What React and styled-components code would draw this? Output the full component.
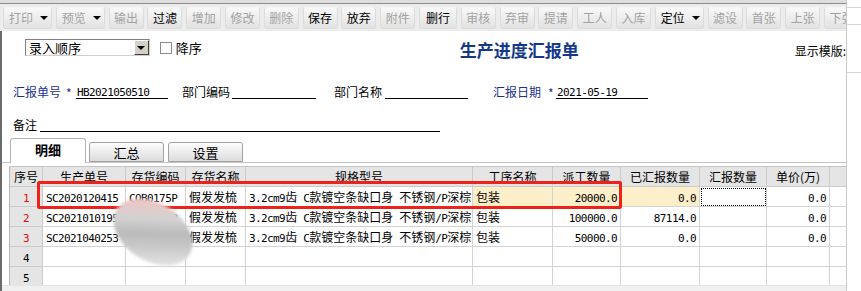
import React from 'react';
import styled, { createGlobalStyle } from 'styled-components';

const GlobalStyle = createGlobalStyle`
  html, body {
    margin: 0;
    padding: 0;
    background: #fff;
  }
  body {
    font-family: "Noto Sans CJK SC", "Noto Sans", sans-serif;
    font-size: 12px;
    color: #000;
  }
`;

const Screen = styled.div`
  width: 861px;
  height: 291px;
  display: flex;
  overflow: hidden;
  background: #fff;
`;

const Main = styled.div`
  width: 846px;
  flex: none;
  display: flex;
  flex-direction: column;
  overflow: hidden;
`;

const Side = styled.div`
  flex: 1;
  border-left: 1px solid #c9c9c9;
  display: flex;
  flex-direction: column;
`;

const SideSlot = styled.div`
  height: ${p => p.$h}px;
  flex: none;
  border-bottom: 1px solid #d6d6d6;
`;

const TopEdge = styled.div`
  height: 3px;
  flex: none;
  background: #dedede;
  border-bottom: 1px solid #8c8c8c;
`;

const Toolbar = styled.div`
  height: 27px;
  flex: none;
  background: #ececec;
  display: flex;
  align-items: center;
  padding-left: 3px;
  gap: 3.8px;
  overflow: hidden;
`;

const ToolButton = styled.div`
  flex: none;
  width: ${p => p.$w}px;
  height: 22px;
  box-sizing: border-box;
  border-radius: 3px;
  background: linear-gradient(#f8f8f8, #e2e2e2);
  border: 1px solid #dcdcdc;
  border-top-color: #f6f6f6;
  display: flex;
  align-items: center;
  justify-content: ${p => (p.$arrow ? 'space-between' : 'center')};
  padding: ${p => (p.$arrow ? '0 3px 0 5px' : '0')};
  font-size: 12px;
  color: ${p => (p.$on ? '#000' : '#a2a2a2')};
  white-space: nowrap;
`;

const DownArrow = styled.span`
  width: 0;
  height: 0;
  border-left: 4px solid transparent;
  border-right: 4px solid transparent;
  border-top: 4px solid #000;
`;

const Body = styled.div`
  flex: 1;
  min-height: 0;
  border-left: 2px solid #6b6b6b;
  display: flex;
  flex-direction: column;
`;

const FormRow = styled.div`
  flex: none;
  display: flex;
  align-items: ${p => p.$align || 'flex-end'};
  height: ${p => p.$h}px;
  margin-top: ${p => p.$top}px;
  padding-left: ${p => p.$pad || 0}px;
  white-space: nowrap;
`;

const SelectBox = styled.div`
  width: 127px;
  height: 17px;
  box-sizing: border-box;
  border: 1px solid #7f7f7f;
  border-right-color: #d4d0c8;
  border-bottom-color: #d4d0c8;
  display: flex;
  align-items: center;
  justify-content: space-between;
  padding-left: 3px;
  font-size: 13px;
  line-height: 15px;
`;

const SelectButton = styled.div`
  width: 15px;
  height: 15px;
  box-sizing: border-box;
  background: #d4d0c8;
  border: 1px solid;
  border-color: #fff #404040 #404040 #fff;
  display: flex;
  align-items: center;
  justify-content: center;
`;

const CheckBox = styled.div`
  width: 12px;
  height: 12px;
  box-sizing: border-box;
  margin: 3px 0 0 10px;
  border: 1px solid #8a8a8a;
  background: #fff;
`;

const CheckText = styled.span`
  margin-left: 4px;
  font-size: 13px;
  line-height: 17px;
`;

const Title = styled.div`
  margin: 1px 0 0 258px;
  font-size: 17px;
  line-height: 20px;
  font-weight: bold;
  color: #15398a;
`;

const ShowLabel = styled.div`
  margin: 5px 0 0 216px;
  font-size: 12px;
  line-height: 14px;
`;

const Label = styled.span`
  margin-left: ${p => p.$m || 0}px;
  font-size: 12px;
  line-height: 14px;
  color: ${p => (p.$req ? '#1d2e8e' : '#000')};
`;

const Star = styled.span`
  margin-left: ${p => p.$m}px;
  width: 7px;
  font-size: 12px;
  line-height: 12px;
  color: #1d2e8e;
`;

const Input = styled.div`
  margin-left: ${p => p.$m}px;
  width: ${p => p.$w}px;
  height: 14px;
  box-sizing: border-box;
  border-bottom: 1px solid #000;
  padding-left: 1px;
  line-height: 11px;
`;

const Ascii = styled.span`
  font-family: "DejaVu Sans Mono", monospace;
  font-size: 11px;
  letter-spacing: -0.6px;
  white-space: pre;
`;

const mixed = text =>
  text.split(/([\x20-\x7e]+)/).map((part, i) =>
    /^[\x20-\x7e]+$/.test(part) ? <Ascii key={i}>{part}</Ascii> : part
  );

const TabStrip = styled.div`
  flex: none;
  height: 25px;
  box-sizing: border-box;
  margin-top: 6px;
  padding-left: 8px;
  display: flex;
  align-items: flex-end;
  border-bottom: 1px solid #c6c6c6;
`;

const Tab = styled.div`
  flex: none;
  box-sizing: border-box;
  width: ${p => (p.$active ? 76 : 75)}px;
  height: ${p => (p.$active ? 25 : 20)}px;
  margin-left: ${p => p.$m || 0}px;
  margin-bottom: ${p => (p.$active ? -1 : 0)}px;
  border: 1px solid ${p => (p.$active ? '#b4b4b4' : '#a2a2a2')};
  border-bottom: ${p => (p.$active ? 'none' : '1px solid #a2a2a2')};
  border-radius: 3px 3px 0 0;
  background: ${p => (p.$active ? '#fff' : 'linear-gradient(#fdfdfd, #dcdcdc)')};
  display: flex;
  align-items: center;
  justify-content: center;
  font-size: 13px;
  font-weight: ${p => (p.$active ? 'bold' : 'normal')};
  padding-bottom: ${p => (p.$active ? 3 : 0)}px;
`;

const GridArea = styled.div`
  flex: 1;
  min-height: 0;
  position: relative;
  overflow: hidden;
  padding: 3px 0 0 7px;
`;

const GridFrame = styled.div`
  border-top: 1px solid #c4c4c4;
  border-left: 1px solid #b5b5b5;
`;

const GridRow = styled.div`
  display: grid;
  grid-template-columns: 33px 83px 60px 60px 227px 80px 68px 79px 67px 63px 60px;
  height: 20px;
`;

const Cell = styled.div`
  box-sizing: border-box;
  height: 20px;
  border-right: 1px solid #d3d3d3;
  border-bottom: 1px solid #d3d3d3;
  padding: 0 3px;
  display: flex;
  align-items: center;
  justify-content: ${p => p.$align || 'flex-start'};
  background: ${p => p.$bg || '#fff'};
  color: ${p => p.$color || '#000'};
  font-size: 12px;
  white-space: nowrap;
  overflow: hidden;
  outline: ${p => (p.$focus ? '1px dotted #000' : 'none')};
  outline-offset: -2px;
`;

const CellText = styled.span`
  white-space: nowrap;
`;

const HeadCell = styled(Cell)`
  background: #e5e5e5;
  border-right-color: #cbcbcb;
  border-bottom-color: #cbcbcb;
  justify-content: center;
`;

const RedMark = styled.div`
  position: absolute;
  left: 35px;
  top: 18px;
  width: 585px;
  height: 28px;
  box-sizing: border-box;
  border: 3px solid #ee2219;
  border-radius: 2px;
  pointer-events: none;
`;

// privacy smudge over the hidden order / item codes
const Smudge = styled.div`
  position: absolute;
  left: 108px;
  top: 40px;
  width: 86px;
  height: 58px;
  border-radius: 50%;
  transform: rotate(32deg);
  background: linear-gradient(
    150deg,
    #efb9b9 0%,
    #ecc6c6 18%,
    #d2d2d2 36%,
    #bababa 52%,
    #c9c9c9 66%,
    #dedede 82%,
    #efefef 100%
  );
  filter: blur(1.5px);
`;

const ScrollBar = styled.div`
  flex: none;
  height: 6px;
  background: #f0f0f0;
  border-top: 1px solid #e4e4e4;
  box-sizing: border-box;
`;

const tools = [
  { t: '打印', w: 49, arrow: true },
  { t: '预览', w: 49, arrow: true },
  { t: '输出' },
  { t: '过滤', on: true },
  { t: '增加' },
  { t: '修改' },
  { t: '删除' },
  { t: '保存', on: true },
  { t: '放弃', on: true },
  { t: '附件' },
  { t: '删行', on: true, w: 38 },
  { t: '审核' },
  { t: '弃审' },
  { t: '提请' },
  { t: '工人' },
  { t: '入库' },
  { t: '定位', w: 49, arrow: true, on: true },
  { t: '滤设' },
  { t: '首张' },
  { t: '上张' },
  { t: '下张' },
];

const headers = ['序号', '生产单号', '存货编码', '存货名称', '规格型号', '工序名称', '派工数量', '已汇报数量', '汇报数量', '单价(万)', '计'];

const spec = '3.2cm9齿 C款镀空条缺口身 不锈钢/P深棕';

const rows = [
  { n: 1, no: 'SC2020120415', code: 'CQB0175P', name: '假发发梳', spec, proc: '包装', qty: '20000.0', done: '0.0', price: '0.0', current: true },
  { n: 2, no: 'SC2021010195', code: 'CQB0175P', name: '假发发梳', spec, proc: '包装', qty: '100000.0', done: '87114.0', price: '0.0' },
  { n: 3, no: 'SC2021040253', code: 'CQB0175P', name: '假发发梳', spec, proc: '包装', qty: '50000.0', done: '0.0', price: '0.0' },
  { n: 4 },
  { n: 5 },
];

const YELLOW = '#fdefc9';

const DataRow = ({ row }) => {
  const hl = row.current ? YELLOW : undefined;
  const txt = v => (v ? <CellText>{mixed(v)}</CellText> : null);
  return (
    <GridRow>
      <HeadCell $color={row.n <= 3 ? '#e01010' : '#000'}>{txt(String(row.n))}</HeadCell>
      <Cell>{txt(row.no)}</Cell>
      <Cell>{txt(row.code)}</Cell>
      <Cell>{txt(row.name)}</Cell>
      <Cell>{txt(row.spec)}</Cell>
      <Cell $bg={hl}>{txt(row.proc)}</Cell>
      <Cell $bg={hl} $align="flex-end">{txt(row.qty)}</Cell>
      <Cell $bg={hl} $align="flex-end">{txt(row.done)}</Cell>
      <Cell $focus={row.current} />
      <Cell $align="flex-end">{txt(row.price)}</Cell>
      <Cell />
    </GridRow>
  );
};

export default function App() {
  return (
    <>
      <GlobalStyle />
      <Screen>
        <Main>
          <TopEdge />
          <Toolbar>
            {tools.map(b => (
              <ToolButton key={b.t} $w={b.w || 35} $on={b.on} $arrow={b.arrow}>
                {b.t}
                {b.arrow && <DownArrow />}
              </ToolButton>
            ))}
          </Toolbar>
          <Body>
            <FormRow $h={17} $top={8} $pad={23} $align="flex-start">
              <SelectBox>
                录入顺序
                <SelectButton>
                  <DownArrow />
                </SelectButton>
              </SelectBox>
              <CheckBox />
              <CheckText>降序</CheckText>
              <Title>生产进度汇报单</Title>
              <ShowLabel>显示模版:</ShowLabel>
            </FormRow>

            <FormRow $h={14} $top={29} $pad={11}>
              <Label $req>汇报单号</Label>
              <Star $m={5}>*</Star>
              <Input $m={3} $w={92}>{mixed('HB2021050510')}</Input>
              <Label $m={14}>部门编码</Label>
              <Input $m={2} $w={84} />
              <Label $m={18}>部门名称</Label>
              <Input $m={3} $w={83} />
              <Label $m={25} $req>汇报日期</Label>
              <Star $m={7}>*</Star>
              <Input $m={1} $w={92}>{mixed('2021-05-19')}</Input>
            </FormRow>

            <FormRow $h={14} $top={19} $pad={11}>
              <Label>备注</Label>
              <Input $m={3} $w={400} />
            </FormRow>

            <TabStrip>
              <Tab $active>明细</Tab>
              <Tab $m={3}>汇总</Tab>
              <Tab $m={4}>设置</Tab>
            </TabStrip>

            <GridArea>
              <GridFrame>
                <GridRow>
                  {headers.map(h => (
                    <HeadCell key={h}>{h}</HeadCell>
                  ))}
                </GridRow>
                {rows.map(r => (
                  <DataRow key={r.n} row={r} />
                ))}
              </GridFrame>
              <RedMark />
              <Smudge />
            </GridArea>
            <ScrollBar />
          </Body>
        </Main>
        <Side>
          <SideSlot $h={7} />
          <SideSlot $h={16} />
          <SideSlot $h={47} />
        </Side>
      </Screen>
    </>
  );
}
